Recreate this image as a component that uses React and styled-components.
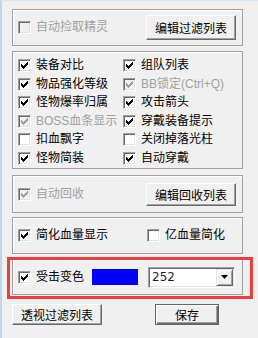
import styled, { createGlobalStyle } from 'styled-components'

const Global = createGlobalStyle`
  html, body {
    margin: 0;
    padding: 0;
    background: #f0f0f0;
  }
  body {
    font-family: "Liberation Sans", "Noto Sans CJK SC", sans-serif;
    font-size: 12px;
    color: #000;
  }
`

const Window = styled.div`
  box-sizing: border-box;
  width: 258px;
  height: 338px;
  border-top: 1px solid #dbe6f1;
  border-left: 2px solid #c3d4e6;
  padding: 8px 0 0 10px;
  display: flex;
  flex-direction: column;
  background: #f0f0f0;
`

const Group = styled.div`
  box-sizing: border-box;
  width: 231px;
  height: ${(p) => p.$h}px;
  margin-top: ${(p) => p.$mt || 0}px;
  border: 1px solid #a0a0a0;
  border-top: ${(p) => (p.$noTop ? 'none' : '1px solid #a0a0a0')};
  box-shadow: inset 1px 1px 0 #fff;
  display: flex;
  align-items: center;
  justify-content: ${(p) => p.$justify || 'flex-start'};
  padding: 0 6px 0 5px;
`

const Grid = styled.div`
  box-sizing: border-box;
  width: 231px;
  height: 118px;
  margin-top: 5px;
  border: 1px solid #a0a0a0;
  box-shadow: inset 1px 1px 0 #fff;
  padding: 7px 0 0 5px;
  display: grid;
  grid-template-columns: 105px 1fr;
  grid-auto-rows: 13px;
  row-gap: 5.6px;
`

const Highlight = styled.div`
  box-sizing: border-box;
  width: 246px;
  height: 42px;
  margin: 3px 0 0 -5px;
  border: 3px solid #f03c3c;
  padding: 0 7px 1px 2px;
  display: flex;
  flex-direction: column;
`

const Item = styled.label`
  display: flex;
  align-items: center;
  height: 13px;
  width: ${(p) => (p.$w ? `${p.$w}px` : 'auto')};
  flex-shrink: 0;
`

const Box = styled.span`
  box-sizing: border-box;
  width: 13px;
  height: 13px;
  flex-shrink: 0;
  border-style: solid;
  border-width: 1px;
  border-color: #a0a0a0 #fff #fff #a0a0a0;
  box-shadow: inset 1px 1px 0 #696969, inset -1px -1px 0 #e3e3e3;
  background: ${(p) => (p.$disabled ? '#f0f0f0' : '#fff')};
  display: block;
`

const Text = styled.span`
  margin-left: 5px;
  line-height: 13px;
  white-space: nowrap;
  color: ${(p) => (p.$disabled ? '#a0a0a0' : '#000')};
`

const Button = styled.button`
  box-sizing: border-box;
  width: ${(p) => p.$w}px;
  height: ${(p) => p.$h}px;
  margin: 0;
  padding: 0;
  font-family: "Liberation Sans", "Noto Sans CJK SC", sans-serif;
  font-size: 12px;
  color: #000;
  background: #f0f0f0;
  border-style: solid;
  border-width: 1px;
  border-color: ${(p) => (p.$default ? '#646464' : '#fff #696969 #696969 #fff')};
  box-shadow: ${(p) =>
    p.$default
      ? 'inset 1px 1px 0 #fff, inset -1px -1px 0 #696969, inset -2px -2px 0 #a0a0a0'
      : 'inset -1px -1px 0 #a0a0a0'};
  flex-shrink: 0;
`

const Swatch = styled.span`
  width: 46px;
  height: 16px;
  background: #0000ff;
  margin-left: 8px;
  flex-shrink: 0;
`

const Combo = styled.div`
  box-sizing: border-box;
  width: 87px;
  height: 21px;
  margin-left: 10px;
  border-style: solid;
  border-width: 1px;
  border-color: #a0a0a0 #fff #fff #a0a0a0;
  box-shadow: inset 1px 1px 0 #696969, inset -1px -1px 0 #e3e3e3;
  background: #fff;
  padding: 1px;
  display: flex;
  align-items: center;
`

const ComboValue = styled.span`
  flex: 1;
  padding-left: 2px;
  font-family: "DejaVu Sans", "Liberation Sans", sans-serif;
  font-size: 12px;
  color: #1a1a2e;
`

const DropButton = styled.span`
  box-sizing: border-box;
  width: 17px;
  height: 17px;
  background: #f0f0f0;
  border-style: solid;
  border-width: 1px;
  border-color: #e3e3e3 #696969 #696969 #e3e3e3;
  box-shadow: inset 1px 1px 0 #fff, inset -1px -1px 0 #a0a0a0;
  display: flex;
  align-items: center;
  justify-content: center;
`

const Footer = styled.div`
  display: flex;
  margin-top: 5px;
  gap: 53px;
`

const CHECK = [
  [6, 0, 1], [5, 1, 2], [0, 2, 1], [4, 2, 3], [0, 3, 2], [3, 3, 3],
  [0, 4, 5], [1, 5, 3], [2, 6, 1],
]

function Check({ checked, disabled, label, w }) {
  return (
    <Item $w={w}>
      <Box $disabled={disabled}>
        {checked && (
          <svg width="11" height="11" viewBox="0 0 11 11" style={{ display: 'block' }}>
            {CHECK.map(([x, y, len]) => (
              <rect
                key={`${x}-${y}`}
                x={x + 2}
                y={y + 2}
                width={len}
                height="1"
                fill={disabled ? '#a0a0a0' : '#000'}
              />
            ))}
          </svg>
        )}
      </Box>
      {label && <Text $disabled={disabled}>{label}</Text>}
    </Item>
  )
}

const options = [
  ['装备对比', true, false],
  ['组队列表', true, false],
  ['物品强化等级', true, false],
  ['BB锁定(Ctrl+Q)', true, true],
  ['怪物爆率归属', true, false],
  ['攻击箭头', true, false],
  ['BOSS血条显示', true, true],
  ['穿戴装备提示', true, false],
  ['扣血飘字', false, false],
  ['关闭掉落光柱', false, false],
  ['怪物简装', true, false],
  ['自动穿戴', true, false],
]

export default function App() {
  return (
    <Window>
      <Global />
      <Group $h={37} $justify="space-between">
        <Check disabled label="自动捡取精灵" />
        <Button $w={90} $h={25}>编辑过滤列表</Button>
      </Group>

      <Grid>
        {options.map(([label, checked, disabled]) => (
          <Check key={label} label={label} checked={checked} disabled={disabled} />
        ))}
      </Grid>

      <Group $h={38} $mt={6} $justify="space-between">
        <Check checked disabled label="自动回收" />
        <Button $w={90} $h={23}>编辑回收列表</Button>
      </Group>

      <Group $h={37} $mt={4}>
        <Check checked label="简化血量显示" w={129} />
        <Check label="亿血量简化" />
      </Group>

      <Highlight>
        <Group $h={35} $noTop>
          <Check checked label="受击变色" w={66} />
          <Swatch />
          <Combo>
            <ComboValue>252</ComboValue>
            <DropButton>
              <svg width="7" height="4" viewBox="0 0 7 4" style={{ display: 'block' }}>
                <path d="M0 0h7L3.5 4z" fill="#000" />
              </svg>
            </DropButton>
          </Combo>
        </Group>
      </Highlight>

      <Footer>
        <Button $w={90} $h={21}>透视过滤列表</Button>
        <Button $w={64} $h={21} $default>保存</Button>
      </Footer>
    </Window>
  )
}
